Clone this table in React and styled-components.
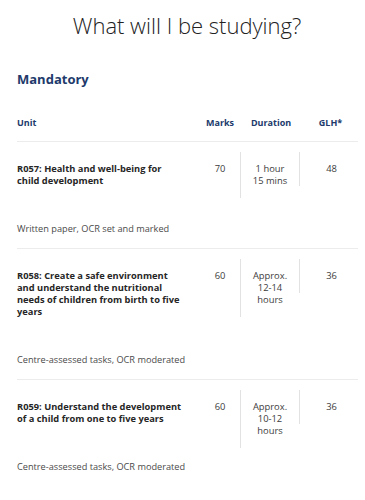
import React from "react";
import styled, { createGlobalStyle } from "styled-components";

const Global = createGlobalStyle`
  html, body { margin: 0; padding: 0; background: #ffffff; }
  body { font-family: "Open Sans", "Liberation Sans", sans-serif; }
`;

const Page = styled.div`
  width: 365px;
  height: 500px;
  overflow: hidden;
  box-sizing: border-box;
  padding: 0 7px 0 17px;
  background: #fff;
`;

const Title = styled.h1`
  margin: 0 -7px 0 -17px;
  padding: 10px 0 0 9px;
  text-align: center;
  font-family: "Open Sans", sans-serif;
  font-weight: 300;
  font-size: 22px;
  line-height: 30px;
  color: #222222;
`;

const Section = styled.h2`
  margin: 30px 0 0;
  font-family: "Open Sans", sans-serif;
  font-weight: 700;
  font-size: 13px;
  line-height: 18px;
  color: #213a6b;
`;

const Grid = styled.div`
  display: grid;
  grid-template-columns: 183px 40px 59px 59px;
  align-items: start;
`;

const HeadRow = styled(Grid)`
  margin-top: 29px;
  padding-bottom: 12px;
  border-bottom: 1px solid #ececec;
`;

const HeadCell = styled.div`
  font-weight: 700;
  font-size: 9px;
  line-height: 12px;
  color: #213a6b;
  text-align: ${(p) => (p.$left ? "left" : "center")};
  padding-left: ${(p) => p.$pl || 0}px;
`;

const Row = styled(Grid)`
  padding-top: 10px;
  border-bottom: ${(p) => (p.$last ? "none" : "1px solid #ececec")};
`;

const UnitCell = styled.div`
  padding: 11px 0 13px;
`;

const UnitName = styled.div`
  width: 168px;
  font-weight: 700;
  font-size: 9.3px;
  line-height: 12px;
  color: #262626;
`;

const Note = styled.div`
  margin-top: 36px;
  font-weight: 400;
  font-size: 9.2px;
  line-height: 12px;
  color: #4a4a4a;
  white-space: nowrap;
`;

const ValueCell = styled.div`
  padding: 11px 0;
  padding-left: ${(p) => p.$pl || 0}px;
  font-weight: 400;
  font-size: 9.4px;
  line-height: 12px;
  color: #3c3c3c;
  text-align: center;
  border-left: ${(p) => (p.$border ? "1px solid #e2e2e2" : "none")};
`;

const units = [
  {
    name: "R057: Health and well-being for child development",
    marks: "70",
    duration: ["1 hour", "15 mins"],
    glh: "48",
    note: "Written paper, OCR set and marked",
  },
  {
    name: "R058: Create a safe environment and understand the nutritional needs of children from birth to five years",
    marks: "60",
    duration: ["Approx.", "12-14", "hours"],
    glh: "36",
    note: "Centre-assessed tasks, OCR moderated",
  },
  {
    name: "R059: Understand the development of a child from one to five years",
    marks: "60",
    duration: ["Approx.", "10-12", "hours"],
    glh: "36",
    note: "Centre-assessed tasks, OCR moderated",
  },
];

export default function App() {
  return (
    <Page>
      <Global />
      <Title>What will I be studying?</Title>
      <Section>Mandatory</Section>
      <HeadRow>
        <HeadCell $left>Unit</HeadCell>
        <HeadCell>Marks</HeadCell>
        <HeadCell $pl={3}>Duration</HeadCell>
        <HeadCell $pl={4}>GLH*</HeadCell>
      </HeadRow>
      {units.map((u, i) => (
        <Row key={u.name} $last={i === units.length - 1}>
          <UnitCell>
            <UnitName>{u.name}</UnitName>
            <Note>{u.note}</Note>
          </UnitCell>
          <ValueCell>{u.marks}</ValueCell>
          <ValueCell $border>
            {u.duration.map((d) => (
              <div key={d}>{d}</div>
            ))}
          </ValueCell>
          <ValueCell $border $pl={5}>{u.glh}</ValueCell>
        </Row>
      ))}
    </Page>
  );
}
